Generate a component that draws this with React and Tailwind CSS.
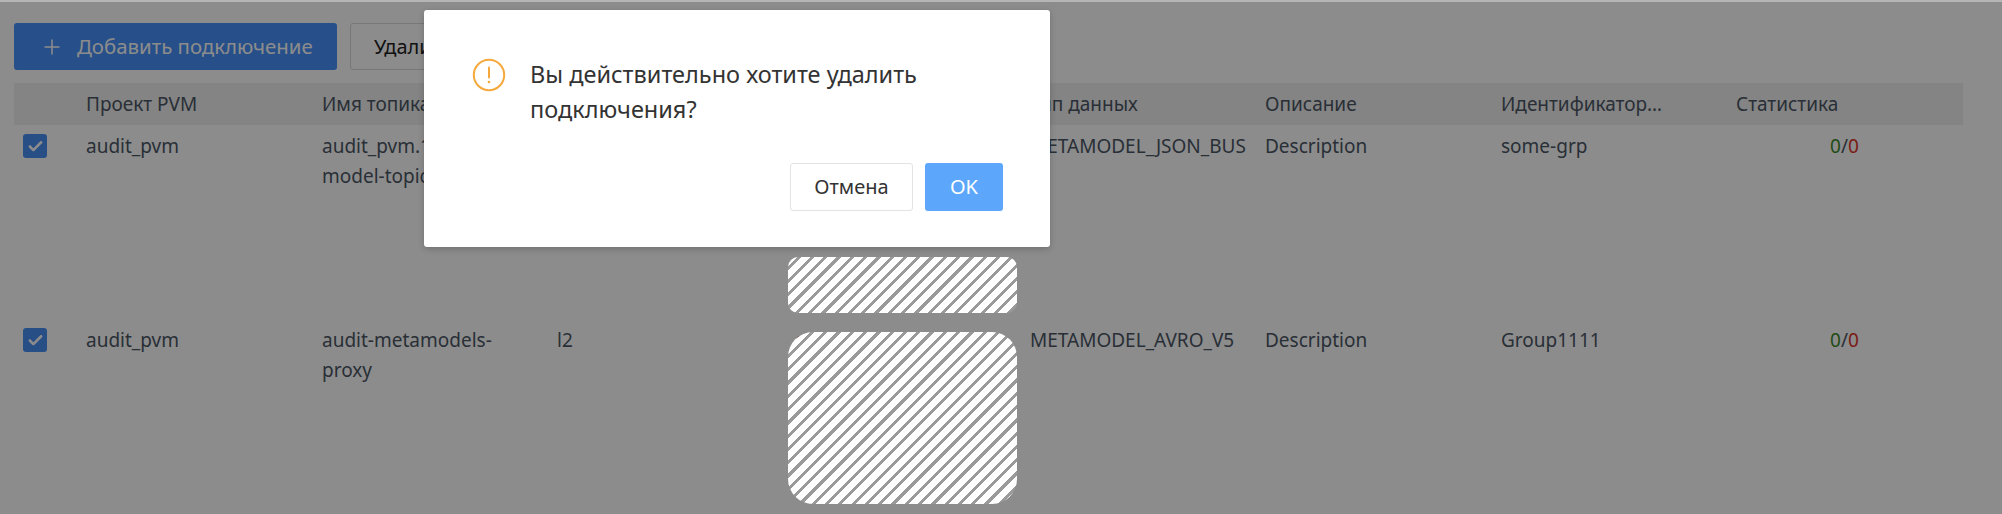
import { Plus, Check } from "lucide-react";

const columns = ["", "Проект PVM", "Имя топика", "", "", "Тип данных", "Описание", "Идентификатор…", "Статистика"];
const rows = [
  { project: "audit_pvm", topic: ["audit_pvm.1", "model-topic"], col3: "", col4: "", type: "METAMODEL_JSON_BUS", desc: "Description", group: "some-grp" },
  { project: "audit_pvm", topic: ["audit-metamodels-", "proxy"], col3: "l2", col4: "c", type: "METAMODEL_AVRO_V5", desc: "Description", group: "Group1111" },
];
const gridCols = "grid grid-cols-[72px_236px_235px_236px_237px_235px_236px_235px_227px]";
const hatch = "absolute left-[788px] w-[229px] z-30 bg-[repeating-linear-gradient(135deg,#ffffff_0,#ffffff_6.4px,#9a9a9a_6.4px,#9a9a9a_9.4px)]";

function Row({ row }) {
  return (
    <div className={`${gridCols} h-[194px] pt-[6px] text-[19px] leading-[30px] text-[#4c5665]`}>
      <div className="pl-[9px] pt-[3px]">
        <div className="w-[24px] h-[24px] rounded-[3px] bg-[#4a8ff5] flex items-center justify-center">
          <Check size={17} strokeWidth={3.5} className="text-white" />
        </div>
      </div>
      <div>{row.project}</div>
      <div>
        {row.topic.map(line => (
          <div key={line}>{line}</div>
        ))}
      </div>
      <div>{row.col3}</div>
      <div className="pl-[2px]">{row.col4}</div>
      <div className="whitespace-nowrap">{row.type}</div>
      <div>{row.desc}</div>
      <div>{row.group}</div>
      <div className="pl-[94px]">
        <span className="text-[#3f8a2a]">0</span>/<span className="text-[#e0352b]">0</span>
      </div>
    </div>
  );
}

export default function App() {
  return (
    <div className="relative w-[2002px] h-[514px] overflow-hidden bg-white font-['Noto_Sans',sans-serif]">
      <div className="pt-[23px] pl-[14px] pr-[39px]">
        <div className="flex gap-[13px]">
          <button className="w-[323px] h-[47px] rounded-[3px] bg-[#4791f9] text-white text-[20.4px] flex items-center pl-[26px] gap-[13px]">
            <Plus size={24} strokeWidth={1.5} />
            Добавить подключение
          </button>
          <button className="w-[160px] h-[47px] rounded-[3px] border border-[#d9d9d9] text-[20px] text-[#222222] text-left pl-[23px]">
            Удалить
          </button>
        </div>
        <div className={`${gridCols} mt-[13px] h-[42px] items-center bg-[#f0f0f0] text-[19px] text-[#4c5665]`}>
          {columns.map((col, i) => (
            <div key={i}>{col}</div>
          ))}
        </div>
        {rows.map((row, i) => (
          <Row key={i} row={row} />
        ))}
      </div>

      <div className="absolute inset-0 top-[2px] bg-black/45 z-10" />
      <div className="absolute inset-x-0 top-0 h-[2px] bg-[#b5b5b5] z-10" />

      <div className={`${hatch} top-[257px] h-[56px] rounded-[10px]`} />
      <div className={`${hatch} top-[332px] h-[172px] rounded-[25px]`} />

      <div className="absolute left-[424px] top-[10px] w-[626px] h-[237px] rounded-[3px] bg-white z-20 pl-[48px] pr-[47px] pt-[47px] shadow-[0_2px_6px_rgba(0,0,0,0.2)]">
        <div className="flex gap-[24px]">
          <svg width="34" height="34" viewBox="0 0 34 34" className="shrink-0 mt-[1px]">
            <circle cx="17" cy="17" r="15.2" fill="none" stroke="#f5a93c" strokeWidth="2" />
            <path d="M17 9.5v10" stroke="#f5a93c" strokeWidth="2" strokeLinecap="round" />
            <circle cx="17" cy="24" r="1.3" fill="#f5a93c" />
          </svg>
          <div className="text-[23.5px] leading-[35px] text-[#333333]">
            Вы действительно хотите удалить подключения?
          </div>
        </div>
        <div className="flex justify-end gap-[12px] mt-[36px]">
          <button className="w-[123px] h-[48px] rounded-[3px] border border-[#e3e3e3] text-[20px] text-[#333333]">Отмена</button>
          <button className="w-[78px] h-[48px] rounded-[3px] bg-[#5ca7fb] text-[20px] text-white">OK</button>
        </div>
      </div>
    </div>
  );
}
